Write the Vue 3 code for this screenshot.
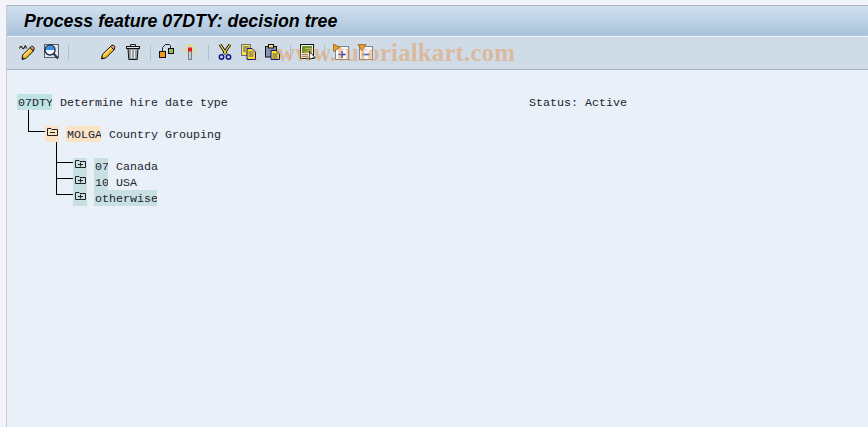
<template>
  <div class="screen">
    <div class="window">
      <header class="title-bar">
        <h1>Process feature 07DTY: decision tree</h1>
      </header>

      <div class="toolbar">
        <!-- display / change -->
        <button class="tool">
          <svg width="16" height="16" viewBox="0 0 16 16">
            <path d="M0.5 4.5 Q1.5 1 3 3.5 T5.5 3 T7.5 4.5" fill="none" stroke="#222" stroke-width="1.2"/>
            <path d="M3 15.5 L3.6 11 L11 3.6 L14.4 7 L7 14.4 Z" fill="#f6c02c" stroke="#111"/>
            <path d="M11 3.6 L12.4 2.4 Q13.4 1.8 15 3.4 Q15.6 4.6 14.4 7 Z" fill="#ef9a80" stroke="#111"/>
            <path d="M4.6 11.6 L11.6 5" stroke="#fff6c8"/>
            <path d="M3 15.5 L3.4 13 L5.4 14.6 Z" fill="#222"/>
          </svg>
        </button>
        <!-- check -->
        <button class="tool">
          <svg width="16" height="16" viewBox="0 0 16 16">
            <rect x="1.5" y="0.5" width="14" height="13" fill="#dfe6ee" stroke="#55606e"/>
            <circle cx="7" cy="6" r="5" fill="#f4f8fc" stroke="#1c2a44" stroke-width="1.4"/>
            <path d="M3 5 A4.2 4.2 0 0 1 11 5 L11 6 L3 6 Z" fill="#2f8bef"/>
            <path d="M10.5 9.5 L15 14.5" stroke="#2a3550" stroke-width="2"/>
          </svg>
        </button>
        <span class="sep first"></span>

        <!-- pencil -->
        <button class="tool">
          <svg width="16" height="16" viewBox="0 0 16 16">
            <path d="M1.5 15 L2.4 10.4 L10.6 2.4 L14 5.8 L6 13.8 Z" fill="#f6c02c" stroke="#111"/>
            <path d="M10.6 2.4 L11.8 1.2 Q13 0.6 14.6 2.2 Q15.4 3.6 14 5.8 Z" fill="#ef9a80" stroke="#111"/>
            <path d="M3.6 11 L11.2 3.8" stroke="#fff6c8"/>
            <path d="M1.5 15 L1.9 12.6 L4 14.2 Z" fill="#222"/>
          </svg>
        </button>
        <!-- delete -->
        <button class="tool trash">
          <svg width="16" height="16" viewBox="0 0 16 16">
            <path d="M5.5 2.5 V0.5 H10.5 V2.5" fill="none" stroke="#222"/>
            <rect x="1.5" y="2.5" width="13" height="2" fill="#dfe5ea" stroke="#111"/>
            <path d="M3 4.5 L3.8 15.5 H12.2 L13 4.5 Z" fill="#9aa2aa" stroke="#111"/>
            <path d="M6.5 6 V14 M9.5 6 V14" stroke="#e4e8ec"/>
          </svg>
        </button>
        <span class="sep"></span>

        <!-- where-used -->
        <button class="tool">
          <svg width="16" height="16" viewBox="0 0 16 16">
            <path d="M4.5 7 V3.5 L7.5 0.5 H11.5 L12.5 1.5 V4" fill="none" stroke="#222"/>
            <rect x="1.5" y="7.5" width="6" height="6" fill="#f09a18" stroke="#111"/>
            <rect x="10.5" y="4.5" width="5" height="5" fill="#9eb85c" stroke="#111"/>
          </svg>
        </button>
        <!-- activate -->
        <button class="tool">
          <svg width="16" height="16" viewBox="0 0 16 16">
            <rect x="6.5" y="6.5" width="3" height="9" fill="#c6ccd2" stroke="#77818c"/>
            <rect x="6" y="3.5" width="4" height="4" fill="#e41c24"/>
            <path d="M7.5 0 V2.5 M8.5 0 V2.5 M3 1 L5.5 3.5 M13 1 L10.5 3.5 M1.5 5.5 H5 M11 5.5 H14.5 M3 9.5 L5.5 7.5 M13 9.5 L10.5 7.5" stroke="#f4e020"/>
          </svg>
        </button>
        <span class="sep before-cut"></span>

        <!-- cut -->
        <button class="tool">
          <svg width="16" height="16" viewBox="0 0 16 16">
            <path d="M3 0.5 L9.4 10 M13 0.5 L6.6 10" stroke="#111" stroke-width="3"/>
            <path d="M3 0.5 L9.4 10 M13 0.5 L6.6 10" stroke="#f5e03a" stroke-width="1.3"/>
            <circle cx="4.5" cy="13" r="2.2" fill="none" stroke="#15158c" stroke-width="1.5"/>
            <circle cx="11.5" cy="13" r="2.2" fill="none" stroke="#15158c" stroke-width="1.5"/>
          </svg>
        </button>
        <!-- copy -->
        <button class="tool">
          <svg width="16" height="16" viewBox="0 0 16 16">
            <rect x="0.5" y="0.5" width="9" height="11" fill="#f7e24a" stroke="#6c7480"/>
            <path d="M6 4.5 H11 L14.5 8 V15.5 H6 Z" fill="#ffe11c" stroke="#12127c"/>
            <path d="M7.5 8 H12.5 M7.5 10 H12.5 M7.5 12 H12.5" stroke="#55557a"/>
            <path d="M2 3 H8 M2 5 H5 M2 7 H5" stroke="#55557a"/>
          </svg>
        </button>
        <!-- paste -->
        <button class="tool">
          <svg width="16" height="16" viewBox="0 0 16 16">
            <rect x="0.5" y="2.5" width="11" height="10.5" fill="#8794b8" stroke="#111"/>
            <rect x="3.5" y="0.5" width="5" height="3.5" fill="#f0d980" stroke="#111"/>
            <path d="M6 6.5 H11 L14.5 10 V15.5 H6 Z" fill="#ffe11c" stroke="#12127c"/>
            <path d="M7.5 10 H12.5 M7.5 12 H12.5 M7.5 14 H12.5" stroke="#55557a"/>
          </svg>
        </button>
        <span class="sep before-transport"></span>

        <!-- transport -->
        <button class="tool">
          <svg width="16" height="16" viewBox="0 0 16 16">
            <rect x="0.5" y="0.5" width="13" height="14" fill="#f0f2f0" stroke="#111"/>
            <rect x="2" y="2" width="10" height="7" fill="#74902a"/>
            <path d="M5 4.5 H12 M7 6.5 H12 M4 8.5 H12" stroke="#b2c05a"/>
            <path d="M2 10.5 H8 M2 12.5 H8" stroke="#7d8790"/>
            <path d="M9.5 7.5 L15.5 14 H12.5 L9.5 15.5 Z" fill="#fff" stroke="#222"/>
          </svg>
        </button>
        <span class="sep before-expand"></span>

        <!-- expand -->
        <button class="tool">
          <svg width="16" height="16" viewBox="0 0 16 16">
            <rect x="2.5" y="2.5" width="13" height="13" fill="#f8fafc" stroke="#7f8892"/>
            <path d="M9 7 V14 M5.5 10.5 H12.5" stroke="#1c3fbe" stroke-width="1.6"/>
            <path d="M0.5 0 L7 3.5 L0.5 7.5 Z" fill="#f29a1c" stroke="#6d4a10" stroke-width="0.6"/>
          </svg>
        </button>
        <!-- collapse -->
        <button class="tool">
          <svg width="16" height="16" viewBox="0 0 16 16">
            <rect x="2.5" y="2.5" width="13" height="13" fill="#f8fafc" stroke="#7f8892"/>
            <path d="M5.5 10.5 H12.5" stroke="#3f66b8" stroke-width="1.6"/>
            <path d="M1 0.5 H9 L5 7 Z" fill="#f29a1c" stroke="#6d4a10" stroke-width="0.6"/>
          </svg>
        </button>

        <span class="watermark"><span class="copy">©</span>www.tutorialkart.com</span>
      </div>

      <main class="content">
        <!-- root -->
        <div class="row">
          <span class="key teal">07DTY</span>
          <span class="desc">Determine hire date type</span>
          <span>Status: Active</span>
        </div>

        <!-- operation -->
        <div class="row branch level-1">
          <span class="folder orange">
            <svg width="14" height="16" viewBox="0 0 14 16">
              <path d="M2.5 9.5 V2.5 H6 L7 3.5 H12.5 V9.5 Z" fill="none" stroke="#222"/>
              <path d="M5 6.5 H10" stroke="#222"/>
            </svg>
          </span>
          <span class="key orange">MOLGA</span>
          <span class="desc">Country Grouping</span>
        </div>

        <!-- values -->
        <div v-for="(item, index) in values" :key="item.key" class="row branch level-2" :class="{ first: index === 0 }">
          <span class="folder teal-soft">
            <svg width="14" height="16" viewBox="0 0 14 16">
              <path d="M2.5 9.5 V2.5 H6 L7 3.5 H12.5 V9.5 Z" fill="none" stroke="#222"/>
              <path d="M5 6.5 H10 M7.5 4.5 V8.5" stroke="#222"/>
            </svg>
          </span>
          <span class="key teal-soft">{{ item.key }}</span>
          <span v-if="item.label" class="desc">{{ item.label }}</span>
        </div>
      </main>
    </div>
  </div>
</template>

<script setup>
const values = [
  { key: '07', label: 'Canada' },
  { key: '10', label: 'USA' },
  { key: 'otherwise', label: '' }
];
</script>

<style>
html,
body {
  margin: 0;
  overflow: hidden;
}
</style>

<style scoped>
.screen {
  width: 868px;
  height: 427px;
  box-sizing: border-box;
  padding: 5px 0 0 6px;
  background: #f3f4fa;
  overflow: hidden;
}

.window {
  height: 100%;
  display: flex;
  flex-direction: column;
  border-top: 1px solid #aab2c0;
  border-left: 1px solid #c6cdd9;
}

.title-bar {
  height: 30px;
  flex: none;
  display: flex;
  align-items: center;
  padding-left: 17px;
  background: linear-gradient(#d0e0ef, #a9c2da);
  border-bottom: 1px solid #f2f6fa;
}

h1 {
  margin: 0;
  font: italic bold 17.8px "Liberation Sans", Arial, sans-serif;
  color: #000;
  white-space: nowrap;
}

.toolbar {
  position: relative;
  height: 30px;
  flex: none;
  display: flex;
  align-items: center;
  padding: 0 0 2px 8px;
  background: #cfdce8;
  border-bottom: 1px solid #a7b3c1;
}

.tool {
  width: 24px;
  height: 24px;
  flex: none;
  padding: 0;
  display: flex;
  align-items: center;
  justify-content: center;
  border: 0;
  background: none;
}

.sep {
  width: 1px;
  height: 15px;
  flex: none;
  margin: 0 3px 0 6px;
  background: #a9c0d6;
}

.sep.first {
  margin: 0 27px 0 5px;
}

.sep.before-cut {
  margin-right: 4px;
}

.sep.before-transport {
  margin: 0 5px;
}

.sep.before-expand {
  margin: 0 4px;
}

.trash {
  margin: 0 -1px 0 1px;
}

.watermark {
  position: absolute;
  left: 243px;
  top: 2px;
  font: bold 25px "Liberation Serif", "Times New Roman", serif;
  letter-spacing: 0.1px;
  color: rgba(232, 150, 80, 0.5);
  white-space: nowrap;
}

.watermark .copy {
  margin-right: 14px;
  font-size: 17px;
  font-weight: normal;
  color: rgba(232, 150, 80, 0.35);
}

.content {
  flex: 1;
  padding: 24px 0 0 10px;
  background: #e9f0f7;
  font: 11.67px/18px "Liberation Mono", "Courier New", monospace;
  color: #1b2430;
}

.row {
  position: relative;
  height: 16px;
  display: flex;
  white-space: pre;
}

.branch::before {
  content: '';
  position: absolute;
  top: -16px;
  height: 21px;
  box-sizing: border-box;
  border-left: 1px solid #000;
  border-bottom: 1px solid #000;
}

.level-1 {
  margin-top: 16px;
  padding-left: 28px;
}

.level-1::before {
  left: 11px;
  width: 17px;
  height: 22px;
}

.level-2 {
  padding-left: 56px;
}

.level-2.first {
  margin-top: 16px;
}

.level-2::before {
  left: 39px;
  width: 17px;
}

.folder {
  width: 14px;
  height: 16px;
  margin-right: 7px;
}

.folder svg {
  display: block;
}

/* text sits 1px inside its highlight, which still ends on the character cell */
.key {
  height: 16px;
  padding-left: 1px;
  margin-right: -1px;
  clip-path: inset(0 1px 0 0);
}

.desc {
  margin-left: 7px;
  padding-left: 1px;
}

.row:first-child .desc {
  width: 469px;
}

.teal {
  background: #bfe3e3;
}

.teal-soft {
  background: #c8e0e2;
}

.orange {
  background: #fbe3c6;
}
</style>
